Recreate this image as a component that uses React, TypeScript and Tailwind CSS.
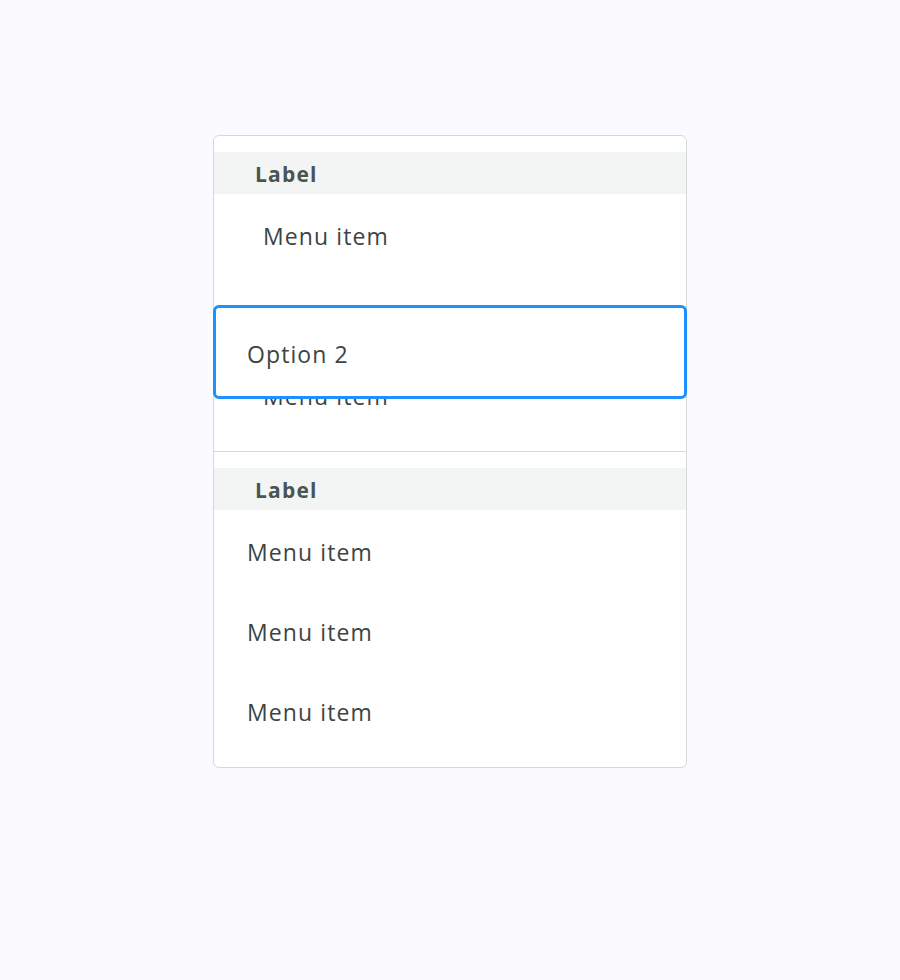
const font = { fontFamily: "'Open Sans', Lato, sans-serif" };

const Item = ({ text, indent }: { text: string; indent?: boolean }) => (
  <div
    className={
      "h-20 flex items-center pt-[4px] text-[23px] tracking-[1.1px] text-[#3b4544] " +
      (indent ? "pl-[49px]" : "pl-[33px]")
    }
  >
    {text}
  </div>
);

const Label = () => (
  <div className="h-[42px] flex items-center pl-[41px] pt-[3px] bg-[#f3f5f4] text-[21px] font-bold tracking-[1.2px] text-[#4a5553]">
    Label
  </div>
);

export default function App() {
  return (
    <div className="min-h-screen bg-[#fbfaff] pt-[135px] flex justify-center" style={font}>
      <div className="relative w-[474px] self-start bg-white border border-[#d3dad9] rounded-md">
        <div className="pt-4 pb-[17px] border-b border-[#d3dad9]">
          <Label />
          <Item text="Menu item" indent />
          <div className="h-20" />
          <Item text="Menu item" indent />
        </div>
        <div className="pt-4 pb-[17px]">
          <Label />
          <Item text="Menu item" />
          <Item text="Menu item" />
          <Item text="Menu item" />
        </div>

        <div className="absolute top-[169px] -left-px -right-px h-[94px] flex items-center pl-[31px] pt-[4px] bg-white border-[3px] border-[#1e90ff] rounded-md text-[23px] tracking-[1.1px] text-[#3b4544]">
          Option 2
        </div>
      </div>
    </div>
  );
}
